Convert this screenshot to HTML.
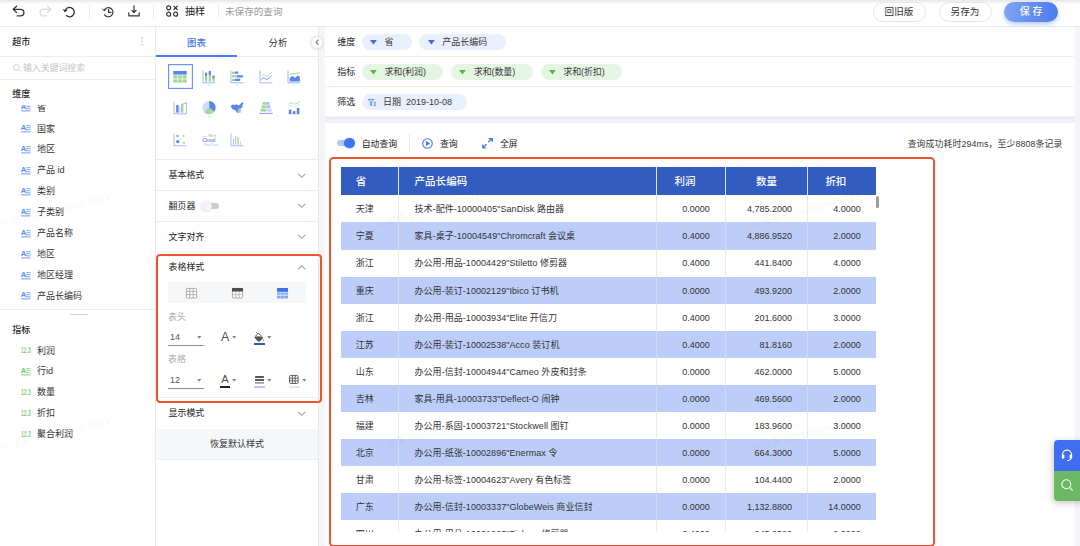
<!DOCTYPE html>
<html lang="zh-CN">
<head>
<meta charset="utf-8">
<title>查询</title>
<style>
*{box-sizing:border-box;margin:0;padding:0}
html,body{width:1080px;height:546px;overflow:hidden;background:#f4f5f9}
body{position:relative;font-family:"Liberation Sans","Noto Sans CJK SC",sans-serif;font-size:9px;color:#333;line-height:1}
.abs{position:absolute}
.t{position:absolute;white-space:nowrap;line-height:12px;height:12px}
svg{position:absolute;overflow:visible}
/* top bar */
#top{position:absolute;left:0;top:0;width:1080px;height:27px;background:#fff;border-bottom:1px solid #e4e8f4}
#topshadow{position:absolute;left:0;top:0;width:1080px;height:4px;background:linear-gradient(#e6e6e6,#fff)}
.vd{position:absolute;width:1px;background:#e8ecf5}
.btn{position:absolute;top:1.8px;height:20.3px;border:1px solid #e3e6ee;border-radius:10px;background:#fff;text-align:center;line-height:18.6px;font-size:9.6px;color:#333}
/* left */
#left{position:absolute;left:0;top:27px;width:156px;height:519px;background:#fff;border-right:1px solid #e6e9f3}
.hl{position:absolute;height:1px;background:#eceef6}
.li{position:absolute;left:37px;white-space:nowrap;line-height:12px;height:12px;font-size:9px;color:#333}
/* mid */
#mid{position:absolute;left:156px;top:27px;width:163px;height:519px;background:#fff;border-right:1px solid #e6e9f3}
.acc{position:absolute;left:12.5px;font-size:8.95px;color:#222;line-height:12px;height:12px;white-space:nowrap}
/* right */
#dims{position:absolute;left:325px;top:27px;width:749.8px;height:89.2px;background:#fff}
#gap{position:absolute;left:325px;top:116px;width:749.8px;height:7px;background:linear-gradient(to bottom,#fff 0%,#e4e6ee 21%,#eef0f5 43%,#eff1f6 78%,#e9ebf2 90%,#fff 100%)}
.pill{position:absolute;height:16.4px;border-radius:9px;font-size:9px;line-height:17.3px;white-space:nowrap;color:#3a3a3a}
.pb{background:#eaeffe}
.pg{background:#e4f5e3;letter-spacing:-0.12px}
#panel{position:absolute;left:325px;top:122.9px;width:749.8px;height:423px;background:#fff}
.redbox{position:absolute;border:2px solid #f0542c;border-radius:4px}
.wm{position:absolute;height:12px;line-height:12px;font-size:10.5px;color:rgba(0,0,0,.05);white-space:nowrap;transform-origin:0 100%;transform:rotate(-14.5deg);z-index:20;pointer-events:none}
/* table */
#tbl{position:absolute;left:340.6px;top:167.1px;width:535.5px;height:364.5px;overflow:hidden;background:#fff}
.row{position:absolute;left:0;width:535.5px;height:27.1px}
.row.s{background:#bccdf9}
.c{position:absolute;top:0;height:100%;line-height:28.9px;font-size:9px;color:#333;white-space:nowrap;border-right:0.8px solid rgba(222,225,233,.7)}
.c1{left:0;width:58.4px;padding-left:15.2px}
.c2{left:58.4px;width:258.1px;padding-left:15.5px;letter-spacing:0.05px}
.c3{left:316.5px;width:68.9px;text-align:right;padding-right:15.2px}
.c4{left:385.4px;width:82.2px;text-align:right;padding-right:15.2px}
.c5{left:467.6px;width:67.9px;text-align:right;padding-right:15.4px;border-right:none}
.hd{background:#335cc0;height:28.3px}
.hd .c{color:#fff;font-size:10.5px;line-height:28px;border-right:0.8px solid rgba(255,255,255,.85);text-align:left;font-weight:500}
.hd .c3{padding-left:17.4px}
.hd .c4{text-align:center;padding:0}
.hd .c5{padding-left:17.2px;border-right:none}
</style>
</head>
<body>
<div id="top"><div id="topshadow"></div>
<svg style="left:12px;top:5.3px" width="14" height="12" viewBox="0 0 14 12" fill="none" stroke="#333" stroke-width="1.3" stroke-linecap="round" stroke-linejoin="round"><path d="M4.6 1.2 L1.2 4.3 L4.6 7.4"/><path d="M1.6 4.3 H8.6 A3.3 3.3 0 0 1 8.6 10.9 H5.2"/></svg>
<svg style="left:37.5px;top:5.3px" width="14" height="12" viewBox="0 0 14 12" fill="none" stroke="#dcdcdc" stroke-width="1.3" stroke-linecap="round" stroke-linejoin="round"><path d="M9.4 1.2 L12.8 4.3 L9.4 7.4"/><path d="M12.4 4.3 H5.4 A3.3 3.3 0 0 0 5.4 10.9 H8.8"/></svg>
<svg style="left:63px;top:5.8px" width="13" height="12" viewBox="0 0 13 12" fill="none" stroke="#333" stroke-width="1.3" stroke-linecap="round" stroke-linejoin="round"><path d="M2.0 5.0 A4.7 4.7 0 1 1 3.4 9.6"/><path d="M0.7 3.6 L2.0 5.4 L3.8 4.2" stroke-width="1.1"/></svg>
<div class="vd" style="left:88.5px;top:5px;height:13px"></div>
<svg style="left:102px;top:5.8px" width="12" height="12" viewBox="0 0 12 12" fill="none" stroke="#333" stroke-width="1.2" stroke-linecap="round" stroke-linejoin="round"><path d="M2.2 4.2 A4.6 4.6 0 1 1 2.6 8.8"/><path d="M0.6 3.0 L2.2 4.8 L4.0 3.4" stroke-width="1.0"/><path d="M6.6 3.4 V6.3 H9.0"/></svg>
<svg style="left:127.5px;top:5.3px" width="12" height="12" viewBox="0 0 12 12" fill="none" stroke="#333" stroke-width="1.2" stroke-linecap="round" stroke-linejoin="round"><path d="M6 0.8 V7.2"/><path d="M3.9 5.4 L6 7.5 L8.1 5.4"/><path d="M0.8 7.8 V10.8 H11.2 V7.8"/></svg>
<div class="vd" style="left:152.5px;top:5px;height:13px"></div>
<svg style="left:165.5px;top:5.3px" width="13" height="12" viewBox="0 0 13 12" fill="none" stroke="#333" stroke-width="1.2" stroke-linecap="round"><circle cx="2.7" cy="2.8" r="2"/><circle cx="2.7" cy="9.2" r="2"/><circle cx="9.6" cy="9.2" r="2"/><path d="M7.9 1.1 L11.3 4.5 M11.3 1.1 L7.9 4.5"/></svg>
<div class="t" style="left:185px;top:5.9px;font-size:10px;color:#222">抽样</div>
<div class="vd" style="left:217.5px;top:5px;height:13px"></div>
<div class="t" style="left:225px;top:5.9px;font-size:9.6px;color:#9a9a9a">未保存的查询</div>
<div class="btn" style="left:872.5px;width:53px">回旧版</div>
<div class="btn" style="left:938.5px;width:53px">另存为</div>
<div class="btn" style="left:1004.5px;width:53.8px;left:1004.2px;border:none;top:1.7px;height:20.6px;line-height:20.4px;font-weight:500;color:#fff;font-size:10px;background:linear-gradient(90deg,#7ea4f4,#4a7cee);box-shadow:0 2px 4px rgba(80,130,240,.45)">保 存</div>
</div>
<div id="left"></div>
<div class="t" style="left:12.3px;top:36px;font-size:9px;color:#1f1f1f;font-weight:500">超市</div>
<svg style="left:140.7px;top:37px" width="2" height="9" viewBox="0 0 2 9" fill="#9a9a9a"><circle cx="1" cy="1" r="0.65"/><circle cx="1" cy="4.3" r="0.65"/><circle cx="1" cy="7.6" r="0.65"/></svg>
<div class="hl" style="left:0;top:56.3px;width:155px"></div>
<svg style="left:13px;top:64.2px" width="8" height="8" viewBox="0 0 8 8" fill="none" stroke="#cfcfcf" stroke-width="0.9"><circle cx="3.4" cy="3.4" r="2.9"/><path d="M5.6 5.6 L7.4 7.4" stroke-linecap="round"/></svg>
<div class="t" style="left:23px;top:62.2px;font-size:8.9px;color:#c6c6c6">输入关键词搜索</div>
<div class="hl" style="left:0;top:79.3px;width:155px"></div>
<div class="t" style="left:12.3px;top:88px;font-size:9px;color:#1f1f1f;font-weight:500">维度</div>
<div class="abs" style="left:0;top:104.6px;width:155px;height:204px;overflow:hidden"><div class="abs" style="left:0;top:-104.6px;width:155px;height:420px">
<svg style="left:20.9px;top:103.3px" width="10" height="9" viewBox="0 0 10 9"><text x="-0.2" y="6.4" font-size="7.6" font-weight="bold" fill="#5a88f4" font-family="Liberation Sans, sans-serif">A</text><path d="M0 7.9 H9.5" stroke="#5a88f4" stroke-width="0.85"/><path d="M5.2 1.7 H9.5 M5.2 3.7 H9.5 M4.9 5.8 H9.5" stroke="#5a88f4" stroke-width="0.85" opacity=".9"/></svg>
<div class="li" style="top:101.6px">省</div>
<svg style="left:20.9px;top:124.2px" width="10" height="9" viewBox="0 0 10 9"><text x="-0.2" y="6.4" font-size="7.6" font-weight="bold" fill="#5a88f4" font-family="Liberation Sans, sans-serif">A</text><path d="M0 7.9 H9.5" stroke="#5a88f4" stroke-width="0.85"/><path d="M5.2 1.7 H9.5 M5.2 3.7 H9.5 M4.9 5.8 H9.5" stroke="#5a88f4" stroke-width="0.85" opacity=".9"/></svg>
<div class="li" style="top:122.5px">国家</div>
<svg style="left:20.9px;top:145.1px" width="10" height="9" viewBox="0 0 10 9"><text x="-0.2" y="6.4" font-size="7.6" font-weight="bold" fill="#5a88f4" font-family="Liberation Sans, sans-serif">A</text><path d="M0 7.9 H9.5" stroke="#5a88f4" stroke-width="0.85"/><path d="M5.2 1.7 H9.5 M5.2 3.7 H9.5 M4.9 5.8 H9.5" stroke="#5a88f4" stroke-width="0.85" opacity=".9"/></svg>
<div class="li" style="top:143.4px">地区</div>
<svg style="left:20.9px;top:166.0px" width="10" height="9" viewBox="0 0 10 9"><text x="-0.2" y="6.4" font-size="7.6" font-weight="bold" fill="#5a88f4" font-family="Liberation Sans, sans-serif">A</text><path d="M0 7.9 H9.5" stroke="#5a88f4" stroke-width="0.85"/><path d="M5.2 1.7 H9.5 M5.2 3.7 H9.5 M4.9 5.8 H9.5" stroke="#5a88f4" stroke-width="0.85" opacity=".9"/></svg>
<div class="li" style="top:164.3px">产品 id</div>
<svg style="left:20.9px;top:186.9px" width="10" height="9" viewBox="0 0 10 9"><text x="-0.2" y="6.4" font-size="7.6" font-weight="bold" fill="#5a88f4" font-family="Liberation Sans, sans-serif">A</text><path d="M0 7.9 H9.5" stroke="#5a88f4" stroke-width="0.85"/><path d="M5.2 1.7 H9.5 M5.2 3.7 H9.5 M4.9 5.8 H9.5" stroke="#5a88f4" stroke-width="0.85" opacity=".9"/></svg>
<div class="li" style="top:185.2px">类别</div>
<svg style="left:20.9px;top:207.8px" width="10" height="9" viewBox="0 0 10 9"><text x="-0.2" y="6.4" font-size="7.6" font-weight="bold" fill="#5a88f4" font-family="Liberation Sans, sans-serif">A</text><path d="M0 7.9 H9.5" stroke="#5a88f4" stroke-width="0.85"/><path d="M5.2 1.7 H9.5 M5.2 3.7 H9.5 M4.9 5.8 H9.5" stroke="#5a88f4" stroke-width="0.85" opacity=".9"/></svg>
<div class="li" style="top:206.1px">子类别</div>
<svg style="left:20.9px;top:228.7px" width="10" height="9" viewBox="0 0 10 9"><text x="-0.2" y="6.4" font-size="7.6" font-weight="bold" fill="#5a88f4" font-family="Liberation Sans, sans-serif">A</text><path d="M0 7.9 H9.5" stroke="#5a88f4" stroke-width="0.85"/><path d="M5.2 1.7 H9.5 M5.2 3.7 H9.5 M4.9 5.8 H9.5" stroke="#5a88f4" stroke-width="0.85" opacity=".9"/></svg>
<div class="li" style="top:227.0px">产品名称</div>
<svg style="left:20.9px;top:249.6px" width="10" height="9" viewBox="0 0 10 9"><text x="-0.2" y="6.4" font-size="7.6" font-weight="bold" fill="#5a88f4" font-family="Liberation Sans, sans-serif">A</text><path d="M0 7.9 H9.5" stroke="#5a88f4" stroke-width="0.85"/><path d="M5.2 1.7 H9.5 M5.2 3.7 H9.5 M4.9 5.8 H9.5" stroke="#5a88f4" stroke-width="0.85" opacity=".9"/></svg>
<div class="li" style="top:247.9px">地区</div>
<svg style="left:20.9px;top:270.5px" width="10" height="9" viewBox="0 0 10 9"><text x="-0.2" y="6.4" font-size="7.6" font-weight="bold" fill="#5a88f4" font-family="Liberation Sans, sans-serif">A</text><path d="M0 7.9 H9.5" stroke="#5a88f4" stroke-width="0.85"/><path d="M5.2 1.7 H9.5 M5.2 3.7 H9.5 M4.9 5.8 H9.5" stroke="#5a88f4" stroke-width="0.85" opacity=".9"/></svg>
<div class="li" style="top:268.8px">地区经理</div>
<svg style="left:20.9px;top:291.4px" width="10" height="9" viewBox="0 0 10 9"><text x="-0.2" y="6.4" font-size="7.6" font-weight="bold" fill="#5a88f4" font-family="Liberation Sans, sans-serif">A</text><path d="M0 7.9 H9.5" stroke="#5a88f4" stroke-width="0.85"/><path d="M5.2 1.7 H9.5 M5.2 3.7 H9.5 M4.9 5.8 H9.5" stroke="#5a88f4" stroke-width="0.85" opacity=".9"/></svg>
<div class="li" style="top:289.7px">产品长编码</div>
</div></div>
<div class="hl" style="left:0;top:309px;width:155px"></div>
<div class="abs" style="left:69.5px;top:313.8px;width:18px;height:1px;background:#cfd3e0"></div>
<div class="t" style="left:12.3px;top:324px;font-size:9px;color:#1f1f1f;font-weight:500">指标</div>
<svg style="left:20.8px;top:346.1px" width="11" height="8" viewBox="0 0 11 8"><text x="0" y="7" font-size="9.2" font-weight="bold" fill="#8fd07e" font-family="Liberation Sans, sans-serif" transform="scale(0.6,1)" textLength="16.6" lengthAdjust="spacingAndGlyphs">12.3</text></svg>
<div class="li" style="top:344.5px">利润</div>
<svg style="left:20.9px;top:367.1px" width="10" height="9" viewBox="0 0 10 9"><text x="-0.2" y="6.4" font-size="7.6" font-weight="bold" fill="#7dc36c" font-family="Liberation Sans, sans-serif">A</text><path d="M0 7.9 H9.5" stroke="#7dc36c" stroke-width="0.85"/><path d="M5.2 1.7 H9.5 M5.2 3.7 H9.5 M4.9 5.8 H9.5" stroke="#7dc36c" stroke-width="0.85" opacity=".9"/></svg>
<div class="li" style="top:365.4px">行id</div>
<svg style="left:20.8px;top:387.9px" width="11" height="8" viewBox="0 0 11 8"><text x="0" y="7" font-size="9.2" font-weight="bold" fill="#8fd07e" font-family="Liberation Sans, sans-serif" transform="scale(0.6,1)" textLength="16.6" lengthAdjust="spacingAndGlyphs">12.3</text></svg>
<div class="li" style="top:386.3px">数量</div>
<svg style="left:20.8px;top:408.8px" width="11" height="8" viewBox="0 0 11 8"><text x="0" y="7" font-size="9.2" font-weight="bold" fill="#8fd07e" font-family="Liberation Sans, sans-serif" transform="scale(0.6,1)" textLength="16.6" lengthAdjust="spacingAndGlyphs">12.3</text></svg>
<div class="li" style="top:407.2px">折扣</div>
<svg style="left:20.8px;top:429.7px" width="11" height="8" viewBox="0 0 11 8"><text x="0" y="7" font-size="9.2" font-weight="bold" fill="#8fd07e" font-family="Liberation Sans, sans-serif" transform="scale(0.6,1)" textLength="16.6" lengthAdjust="spacingAndGlyphs">12.3</text></svg>
<div class="li" style="top:428.1px">聚合利润</div>
<div id="mid"></div>
<div class="t" style="left:187px;top:36.8px;font-size:9.4px;color:#4175ee;font-weight:500">图表</div>
<div class="t" style="left:268.5px;top:36.8px;font-size:9.4px;color:#333">分析</div>
<div class="hl" style="left:156px;top:56px;width:162px;background:#e9ecf4"></div>
<div class="abs" style="left:156px;top:55.2px;width:81px;height:1.6px;background:#4a7cf0"></div>
<div class="abs" style="left:311.1px;top:36.2px;width:12.4px;height:12.4px;border-radius:50%;background:#fff;border:0.6px solid #e6e8ef;box-shadow:0 0.5px 2.5px rgba(0,0,0,.16);z-index:5"></div>
<svg style="left:315px;top:39.3px;z-index:6" width="4.4" height="6.4" viewBox="0 0 4.4 6.4" fill="none" stroke="#777" stroke-width="1.05"><path d="M3.6 0.6 L1 3.2 L3.6 5.8"/></svg>
<div class="abs" style="left:167.6px;top:64.3px;width:25px;height:24.4px;border:1px solid #6b91f5;box-shadow:inset 0 0 0 0.5px #c9d7fb"></div>
<svg style="left:173.2px;top:69.9px" width="14" height="14" viewBox="0 0 14 14" fill="none"><rect x="0.3" y="1" width="13.4" height="3.6" fill="#5b84f0"/><rect x="0.3" y="5.3" width="13.4" height="3.3" fill="#a3d797"/><rect x="0.3" y="9.3" width="13.4" height="3.3" fill="#a3d797"/><path d="M4.7 5.3 V12.6 M9.3 5.3 V12.6" stroke="#fff" stroke-width="0.7"/></svg>
<svg style="left:201.6px;top:69.9px" width="14" height="14" viewBox="0 0 14 14" fill="none"><path d="M1 0.5 V12.8 H13.4" stroke="#8facf6" stroke-width="0.85"/><path d="M6 14.6 L7 15.6 L8 14.6" stroke="#a9c0f8" stroke-width="0.7"/><rect x="3" y="5.2" width="2.2" height="6.4" fill="#a3d797"/><rect x="3" y="2.6" width="2.2" height="3.4" rx="1" fill="#5b84f0"/><rect x="6.7" y="4.4" width="2.2" height="7.2" fill="#a3d797"/><rect x="6.7" y="0.8" width="2.2" height="4.6" rx="1" fill="#5b84f0"/><rect x="10.4" y="8" width="2.2" height="3.6" fill="#a3d797"/><rect x="10.4" y="5.4" width="2.2" height="3.2" rx="1" fill="#5b84f0"/></svg>
<svg style="left:230.1px;top:69.9px" width="14" height="14" viewBox="0 0 14 14" fill="none"><path d="M1 0.5 V12.8 H13.4" stroke="#8facf6" stroke-width="0.85"/><path d="M6 14.6 L7 15.6 L8 14.6" stroke="#a9c0f8" stroke-width="0.7"/><rect x="2" y="1.6" width="4" height="2.2" fill="#a3d797"/><rect x="5" y="1.6" width="3.4" height="2.2" rx="1" fill="#5b84f0"/><rect x="2" y="5.2" width="6" height="2.2" fill="#a3d797"/><rect x="7" y="5.2" width="6" height="2.2" rx="1" fill="#5b84f0"/><rect x="2" y="8.8" width="4" height="2.2" fill="#a3d797"/><rect x="5" y="8.8" width="5.4" height="2.2" rx="1" fill="#5b84f0"/></svg>
<svg style="left:258.5px;top:69.9px" width="14" height="14" viewBox="0 0 14 14" fill="none"><path d="M1 0.5 V12.8 H13.4" stroke="#8facf6" stroke-width="0.85"/><path d="M2.4 6.4 C4 4.2 5 4.2 6.4 5.6 S9.4 5.6 12.6 2.6" stroke="#a3d797" stroke-width="0.9"/><path d="M2.4 9.6 C4 7.4 5 7.4 6.4 8.8 S9.4 8.8 12.6 5.8" stroke="#5b84f0" stroke-width="0.9"/></svg>
<svg style="left:287.1px;top:69.9px" width="14" height="14" viewBox="0 0 14 14" fill="none"><path d="M1 0.5 V12.8 H13.4" stroke="#8facf6" stroke-width="0.85"/><path d="M6 14.6 L7 15.6 L8 14.6" stroke="#a9c0f8" stroke-width="0.7"/><path d="M2.6 4.6 C5 2.8 7 4.4 9 3.6 S11.6 2.8 12.8 3" stroke="#a3d797" stroke-width="1.1"/><path d="M2.6 11.4 V8.2 L5.4 5.8 L8 8 L10.8 5.4 L12.8 6.4 V11.4 Z" fill="#5b84f0"/></svg>
<svg style="left:173.2px;top:101.2px" width="14" height="14" viewBox="0 0 14 14" fill="none"><path d="M1 0.8 V12.8 H13.4 V1.6 L10 3" stroke="#8facf6" stroke-width="0.85"/><rect x="3.2" y="4" width="2.4" height="7.6" fill="#5b84f0"/><rect x="8" y="2.8" width="2.4" height="8.8" fill="#a3d797"/><rect x="5.8" y="5.6" width="1.6" height="6" fill="#cddafc"/></svg>
<svg style="left:201.6px;top:101.2px" width="14" height="14" viewBox="0 0 14 14" fill="none"><circle cx="7" cy="6.6" r="6.6" fill="#cddafc"/><path d="M7 6.6 V0 A6.6 6.6 0 0 1 12.2 10.6 Z" fill="#5b84f0"/><path d="M7 6.6 L12.2 10.6 A6.6 6.6 0 0 1 2.4 11.4 Z" fill="#a3d797"/><path d="M7 0 V6.6 L0.4 6.6" stroke="#e6ecfd" stroke-width="0.5"/><path d="M6 15.2 L7 16.2 L8 15.2" stroke="#a9c0f8" stroke-width="0.7"/></svg>
<svg style="left:230.1px;top:101.2px" width="14" height="14" viewBox="0 0 14 14" fill="none"><path d="M0.6 5.2 L2.6 3.4 L5 4 L6.4 3.2 L8.4 4.6 L10.4 3.2 L11.6 1.2 L13.6 2.2 L12.2 4.6 L12.8 6 L10.6 7.4 L11 9.6 L9.2 11.8 L6.8 11.4 L5.6 9.2 L3 8.6 L1.6 7 Z" fill="#5b84f0"/><path d="M8 8 L10.8 6.6 L11.4 9.4 L9.2 11.6 L7.4 10.4 Z" fill="#a3d797" opacity=".85"/><circle cx="10.8" cy="10.6" r="1.2" fill="#cddafc"/></svg>
<svg style="left:258.5px;top:101.2px" width="14" height="14" viewBox="0 0 14 14" fill="none"><rect x="3.6" y="1" width="3.2" height="2.8" fill="#a3d797"/><rect x="7.2" y="1" width="3.2" height="2.8" fill="#a9c0f8"/><rect x="2.6" y="4.4" width="4.2" height="2.8" fill="#a3d797"/><rect x="7.2" y="4.4" width="4.2" height="2.8" fill="#a9c0f8"/><rect x="1.4" y="7.8" width="5.4" height="2.8" fill="#a3d797"/><rect x="7.2" y="7.8" width="5.4" height="2.8" fill="#cddafc"/><path d="M0.2 12.4 H13.8" stroke="#5b84f0" stroke-width="0.8"/></svg>
<svg style="left:287.1px;top:101.2px" width="14" height="14" viewBox="0 0 14 14" fill="none"><path d="M1.8 3.4 C3.6 1.2 5 1.4 6.6 2.6 S10 2.6 12.6 0.6" stroke="#a3d797" stroke-width="0.9"/><path d="M1.8 6.2 C3.6 4 5 4.2 6.6 5.4 S10 5.4 12.6 3.4" stroke="#cddafc" stroke-width="0.9"/><rect x="1.8" y="8.6" width="2.6" height="4.6" fill="#5b84f0"/><rect x="5.8" y="10.2" width="2.6" height="3" fill="#5b84f0"/><rect x="9.8" y="7" width="2.6" height="6.2" fill="#5b84f0"/></svg>
<svg style="left:173.2px;top:133.1px" width="14" height="14" viewBox="0 0 14 14" fill="none"><path d="M1 0.5 V12.8 H13.4" stroke="#8facf6" stroke-width="0.85"/><circle cx="4.4" cy="3" r="1" fill="#5b84f0"/><circle cx="10.6" cy="3" r="1.1" fill="#a3d797"/><circle cx="4.8" cy="8.6" r="1.7" fill="#5b84f0"/><circle cx="7.8" cy="6" r="0.8" fill="#cddafc"/><circle cx="11" cy="9.8" r="1.1" fill="#a3d797"/></svg>
<svg style="left:201.6px;top:133.1px" width="14" height="14" viewBox="0 0 14 14" fill="none"><text x="0.2" y="9.4" font-size="5.2" font-weight="bold" letter-spacing="-0.35" fill="#5b84f0" font-family="Liberation Sans, sans-serif" opacity=".8">Cloud</text><text x="6.6" y="4" font-size="3" font-weight="bold" fill="#a3d797" font-family="Liberation Sans, sans-serif">Word</text><text x="2" y="12.6" font-size="2.8" fill="#a9c0f8" font-family="Liberation Sans, sans-serif">WordCloud</text><path d="M0.6 3.4 H5" stroke="#a9c0f8" stroke-width="0.6"/></svg>
<svg style="left:230.1px;top:133.1px" width="14" height="14" viewBox="0 0 14 14" fill="none"><path d="M1 0.5 V12.8 H13.4" stroke="#8facf6" stroke-width="0.85"/><rect x="3" y="6" width="1" height="5.8" fill="#a3d797"/><rect x="5.2" y="2.6" width="1" height="9.2" fill="#a9c0f8"/><rect x="7.4" y="4.4" width="1.4" height="7.4" fill="#a3d797"/><rect x="10" y="8" width="1" height="3.8" fill="#cddafc"/></svg>
<div class="acc" style="top:169.2px;left:168.5px">基本格式</div>
<svg style="left:297.2px;top:172.8px" width="9.4" height="5.2" viewBox="0 0 8.2 5" fill="none" stroke="#a2a2a2" stroke-width="1"><path d="M0.6 0.8 L4.1 4.1 L7.6 0.8"/></svg>
<div class="acc" style="top:199.8px;left:168.5px">翻页器</div>
<svg style="left:297.2px;top:203.4px" width="9.4" height="5.2" viewBox="0 0 8.2 5" fill="none" stroke="#a2a2a2" stroke-width="1"><path d="M0.6 0.8 L4.1 4.1 L7.6 0.8"/></svg>
<div class="acc" style="top:230.6px;left:168.5px">文字对齐</div>
<svg style="left:297.2px;top:234.2px" width="9.4" height="5.2" viewBox="0 0 8.2 5" fill="none" stroke="#a2a2a2" stroke-width="1"><path d="M0.6 0.8 L4.1 4.1 L7.6 0.8"/></svg>
<div class="acc" style="top:261.4px;left:168.5px">表格样式</div>
<svg style="left:297.2px;top:265.0px" width="9.4" height="5.2" viewBox="0 0 8.2 5" fill="none" stroke="#a2a2a2" stroke-width="1"><path d="M0.6 4.1 L4.1 0.8 L7.6 4.1"/></svg>
<div class="acc" style="top:407.4px;left:168.5px">显示模式</div>
<svg style="left:297.2px;top:411.0px" width="9.4" height="5.2" viewBox="0 0 8.2 5" fill="none" stroke="#a2a2a2" stroke-width="1"><path d="M0.6 0.8 L4.1 4.1 L7.6 0.8"/></svg>
<div class="hl" style="left:156px;top:159.3px;width:162px"></div>
<div class="hl" style="left:156px;top:190.2px;width:162px"></div>
<div class="hl" style="left:156px;top:220.6px;width:162px"></div>
<div class="hl" style="left:156px;top:251.7px;width:162px"></div>
<div class="hl" style="left:156px;top:397.4px;width:162px"></div>
<div class="hl" style="left:156px;top:428.6px;width:162px"></div>
<div class="abs" style="left:202px;top:202.6px;width:17px;height:6.6px;border-radius:4px;background:#c8ccd2"></div>
<div class="abs" style="left:201px;top:200.6px;width:10.6px;height:10.6px;border-radius:50%;background:#f3f4f7;box-shadow:0 0.5px 1.8px rgba(0,0,0,.2)"></div>
<div class="abs" style="left:168.1px;top:282.4px;width:138.1px;height:20.9px;background:#f6f7f9"></div>
<svg style="left:185.9px;top:288px" width="11" height="10.4" viewBox="0 0 11 10.4" fill="none"><rect x="0.4" y="0.4" width="10.2" height="9.6" rx="0.8" fill="#fff" stroke="#9a9a9a" stroke-width="0.8"/><path d="M0.4 3.4 H10.6 M0.4 6.6 H10.6 M3.8 0.4 V10 M7.2 0.4 V10" stroke="#9a9a9a" stroke-width="0.7"/></svg>
<svg style="left:231.9px;top:288px" width="11" height="10.4" viewBox="0 0 11 10.4" fill="none"><rect x="0.4" y="0.4" width="10.2" height="9.6" rx="0.8" fill="#fff" stroke="#9a9a9a" stroke-width="0.8"/><path d="M0.4 6.6 H10.6 M3.8 3 V10 M7.2 3 V10" stroke="#aaa" stroke-width="0.7"/><path d="M0 0.8 Q0 0 0.8 0 H10.2 Q11 0 11 0.8 V3.4 H0 Z" fill="#4d4d4d"/></svg>
<svg style="left:277.3px;top:288px" width="11" height="10.4" viewBox="0 0 11 10.4" fill="none"><rect x="0" y="0" width="11" height="10.4" rx="1" fill="#86a4f6"/><path d="M0 4.2 H11 M0 7.2 H11" stroke="#fff" stroke-width="0.8"/><path d="M3.8 4 V10.4 M7.2 4 V10.4" stroke="#dbe4fd" stroke-width="0.6"/><path d="M0 1 Q0 0 1 0 H10 Q11 0 11 1 V3.7 H0 Z" fill="#3f70ee"/></svg>
<div class="t" style="left:168.1px;top:311.1px;font-size:9px;color:#a8a8a8">表头</div>
<div class="t" style="left:168.1px;top:353.3px;font-size:9px;color:#a8a8a8">表格</div>
<div class="t" style="left:169.9px;top:330.9px;font-size:9px;color:#555">14</div>
<div class="abs" style="left:168.1px;top:345.2px;width:36px;height:0.8px;background:#8c8c8c"></div>
<svg style="left:197.3px;top:335.6px" width="4.6" height="2.8" viewBox="0 0 4.6 2.8"><path d="M0.2 0 H4.4 L2.3 2.8 Z" fill="#858585"/></svg>
<div class="t" style="left:169.9px;top:373.8px;font-size:9px;color:#555">12</div>
<div class="abs" style="left:168.1px;top:387.6px;width:36px;height:0.8px;background:#8c8c8c"></div>
<svg style="left:197.3px;top:378.5px" width="4.6" height="2.8" viewBox="0 0 4.6 2.8"><path d="M0.2 0 H4.4 L2.3 2.8 Z" fill="#858585"/></svg>
<div class="t" style="left:220.9px;top:329.3px;font-size:12.4px;line-height:16px;height:16px;color:#4d4d4d">A</div>
<svg style="left:232.4px;top:335.6px" width="4.6" height="2.8" viewBox="0 0 4.6 2.8"><path d="M0.2 0 H4.4 L2.3 2.8 Z" fill="#858585"/></svg>
<svg style="left:254.4px;top:332.2px" width="10.6" height="10" viewBox="0 0 10.6 10" fill="none"><path d="M2.4 0.4 L4.2 2.2" stroke="#555" stroke-width="0.8" stroke-linecap="round"/><path d="M4.4 1.2 L8.6 5.2 Q9 5.8 8.4 6.4 L6 8.8 Q5 9.5 4 8.8 L1.2 6 Q0.5 5.2 1.2 4.4 Z" fill="#fff" stroke="#555" stroke-width="0.9" stroke-linejoin="round"/><path d="M0.9 5 Q4.6 3.4 8.6 5.4 Q9 5.9 8.4 6.5 L6 8.9 Q5 9.6 4 8.9 L1.2 6.1 Q0.6 5.5 0.9 5 Z" fill="#555"/><path d="M9.6 7 Q10.5 8.5 9.6 9.1 Q8.7 8.5 9.6 7 Z" fill="#555"/></svg>
<div class="abs" style="left:254.4px;top:343.1px;width:10.6px;height:2.1px;background:#3058c6"></div>
<svg style="left:267.0px;top:335.6px" width="4.6" height="2.8" viewBox="0 0 4.6 2.8"><path d="M0.2 0 H4.4 L2.3 2.8 Z" fill="#858585"/></svg>
<div class="t" style="left:221.3px;top:372.4px;font-size:11.2px;line-height:15px;height:15px;color:#4d4d4d">A</div>
<div class="abs" style="left:219.8px;top:385.9px;width:10.6px;height:2.1px;background:#222"></div>
<svg style="left:232.4px;top:378.5px" width="4.6" height="2.8" viewBox="0 0 4.6 2.8"><path d="M0.2 0 H4.4 L2.3 2.8 Z" fill="#858585"/></svg>
<div class="abs" style="left:254.8px;top:375.6px;width:9.6px;height:2.5px;background:#555;border-radius:0.4px"></div><div class="abs" style="left:254.8px;top:378.8px;width:9.6px;height:2.7px;background:#5a5a5a"></div><div class="abs" style="left:254.8px;top:382.2px;width:9.6px;height:1.8px;background:linear-gradient(#8a8a8a,#c8c8c8)"></div>
<div class="abs" style="left:254.4px;top:385.9px;width:10.6px;height:2.1px;background:#b8cafa"></div>
<svg style="left:267.0px;top:378.5px" width="4.6" height="2.8" viewBox="0 0 4.6 2.8"><path d="M0.2 0 H4.4 L2.3 2.8 Z" fill="#858585"/></svg>
<svg style="left:289.4px;top:374.7px" width="9.6" height="9" viewBox="0 0 9.6 9" fill="none" stroke="#5e5e5e" stroke-width="0.95"><rect x="0.5" y="0.5" width="8.6" height="8" rx="1.2"/><path d="M0.5 3.2 H9.1 M0.5 5.8 H9.1 M3.4 0.5 V8.5 M6.2 0.5 V8.5"/></svg>
<div class="abs" style="left:289.2px;top:385.9px;width:10.4px;height:2.1px;background:#e3e5ef"></div>
<svg style="left:301.7px;top:378.5px" width="4.6" height="2.8" viewBox="0 0 4.6 2.8"><path d="M0.2 0 H4.4 L2.3 2.8 Z" fill="#858585"/></svg>
<div class="abs" style="left:156px;top:429.4px;width:162px;height:30.2px;background:#f6f7f9;border-bottom:1px solid #eceef4"></div>
<div class="t" style="left:156px;width:162px;text-align:center;top:438.3px;font-size:9px;color:#333">恢复默认样式</div>
<div class="redbox" style="left:156.4px;top:253.6px;width:165.6px;height:149.4px;border-width:2.3px;z-index:8"></div>
<div id="dims"></div>
<div class="hl" style="left:325px;top:56.4px;width:749px;background:#eceef5"></div>
<div class="hl" style="left:325px;top:86.3px;width:749px;background:#eceef5"></div>
<div class="t" style="left:337.2px;top:36.2px;font-size:9px;color:#222">维度</div>
<div class="t" style="left:337.2px;top:66.2px;font-size:9px;color:#222">指标</div>
<div class="t" style="left:337.2px;top:96.2px;font-size:9px;color:#222">筛选</div>
<div class="pill pb" style="left:361.7px;top:33.8px;width:50.5px;padding-left:22.8px">省</div>
<svg style="left:370.1px;top:40.3px" width="6.8" height="4.3" viewBox="0 0 6.8 4.3"><path d="M0.5 0 H6.3 Q6.9 0.1 6.5 0.6 L3.8 4 Q3.4 4.4 3 4 L0.3 0.6 Q-0.1 0.1 0.5 0 Z" fill="#3a6cf0"/></svg>
<div class="pill pb" style="left:419.4px;top:33.8px;width:86.8px;padding-left:22.8px">产品长编码</div>
<svg style="left:427.8px;top:40.3px" width="6.8" height="4.3" viewBox="0 0 6.8 4.3"><path d="M0.5 0 H6.3 Q6.9 0.1 6.5 0.6 L3.8 4 Q3.4 4.4 3 4 L0.3 0.6 Q-0.1 0.1 0.5 0 Z" fill="#3a6cf0"/></svg>
<div class="pill pg" style="left:361.7px;top:63.8px;width:81.7px;padding-left:22.8px">求和(利润)</div>
<svg style="left:370.1px;top:70.3px" width="6.8" height="4.3" viewBox="0 0 6.8 4.3"><path d="M0.5 0 H6.3 Q6.9 0.1 6.5 0.6 L3.8 4 Q3.4 4.4 3 4 L0.3 0.6 Q-0.1 0.1 0.5 0 Z" fill="#5cb544"/></svg>
<div class="pill pg" style="left:451px;top:63.8px;width:81.8px;padding-left:22.8px">求和(数量)</div>
<svg style="left:459.4px;top:70.3px" width="6.8" height="4.3" viewBox="0 0 6.8 4.3"><path d="M0.5 0 H6.3 Q6.9 0.1 6.5 0.6 L3.8 4 Q3.4 4.4 3 4 L0.3 0.6 Q-0.1 0.1 0.5 0 Z" fill="#5cb544"/></svg>
<div class="pill pg" style="left:540.5px;top:63.8px;width:81.7px;padding-left:22.8px">求和(折扣)</div>
<svg style="left:548.9px;top:70.3px" width="6.8" height="4.3" viewBox="0 0 6.8 4.3"><path d="M0.5 0 H6.3 Q6.9 0.1 6.5 0.6 L3.8 4 Q3.4 4.4 3 4 L0.3 0.6 Q-0.1 0.1 0.5 0 Z" fill="#5cb544"/></svg>
<div class="pill pb" style="left:361.7px;top:93.8px;width:105.6px;padding-left:21.4px">日期&nbsp; 2019-10-08</div>
<svg style="left:367.6px;top:98.6px" width="8" height="7.4" viewBox="0 0 8 7.4" fill="none" stroke="#4a7cf0" stroke-width="0.8" stroke-linejoin="round"><path d="M0.4 0.4 H5.8 L3.7 3 V6.8 L2.5 6 V3 Z"/><path d="M6.2 3.4 H7.6 M6.2 5 H7.6 M6.2 6.6 H7.6" stroke-linecap="round"/></svg>
<div id="gap"></div>
<div id="panel"></div>
<div class="abs" style="left:336.6px;top:139.9px;width:17.4px;height:6.6px;border-radius:4px;background:#b4c8fb"></div>
<div class="abs" style="left:344px;top:137.9px;width:10.6px;height:10.6px;border-radius:50%;background:#3f73f0;box-shadow:0 0.5px 1.5px rgba(40,80,200,.45)"></div>
<div class="t" style="left:361.7px;top:137.6px;font-size:8.9px;color:#222">自动查询</div>
<div class="vd" style="left:409px;top:134.3px;height:16.3px;background:#e6e8ee"></div>
<svg style="left:422.2px;top:137.7px" width="11" height="11" viewBox="0 0 11 11"><circle cx="5.5" cy="5.5" r="4.8" fill="#fff" stroke="#4a7cf0" stroke-width="1.1"/><path d="M4 2.9 L8.1 5.5 L4 8.1 Z" fill="#3f73f0"/></svg>
<div class="t" style="left:439.9px;top:137.6px;font-size:8.9px;color:#222">查询</div>
<svg style="left:482.3px;top:138.2px" width="11" height="10.4" viewBox="0 0 11 10.4" fill="none" stroke="#3f73f0" stroke-width="1.25" stroke-linecap="round" stroke-linejoin="round"><path d="M6.6 3.8 L10.2 0.6 M7.2 0.6 H10.2 V3.4"/><path d="M4.2 6.4 L0.8 9.8 M0.8 7 V9.8 H3.6"/></svg>
<div class="t" style="left:499.9px;top:137.6px;font-size:8.9px;color:#222">全屏</div>
<div class="t" style="right:17.6px;top:137.6px;font-size:8.9px;color:#3c3c3c;letter-spacing:0.09px">查询成功耗时294ms，至少8808条记录</div>
<div class="redbox" style="left:329.1px;top:156.5px;width:605.8px;height:390px;border-width:2.4px;border-radius:4.5px"></div>
<div id="tbl">
<div class="row hd" style="top:0"><div class="c c1">省</div><div class="c c2">产品长编码</div><div class="c c3">利润</div><div class="c c4">数量</div><div class="c c5">折扣</div></div>
<div class="row" style="top:28.30px"><div class="c c1">天津</div><div class="c c2">技术-配件-10000405&quot;SanDisk 路由器</div><div class="c c3">0.0000</div><div class="c c4">4,785.2000</div><div class="c c5">4.0000</div></div>
<div class="row s" style="top:55.35px"><div class="c c1">宁夏</div><div class="c c2">家具-桌子-10004549&quot;Chromcraft 会议桌</div><div class="c c3">0.4000</div><div class="c c4">4,886.9520</div><div class="c c5">2.0000</div></div>
<div class="row" style="top:82.40px"><div class="c c1">浙江</div><div class="c c2">办公用-用品-10004429&quot;Stiletto 修剪器</div><div class="c c3">0.4000</div><div class="c c4">441.8400</div><div class="c c5">4.0000</div></div>
<div class="row s" style="top:109.45px"><div class="c c1">重庆</div><div class="c c2">办公用-装订-10002129&quot;Ibico 订书机</div><div class="c c3">0.0000</div><div class="c c4">493.9200</div><div class="c c5">2.0000</div></div>
<div class="row" style="top:136.50px"><div class="c c1">浙江</div><div class="c c2">办公用-用品-10003934&quot;Elite 开信刀</div><div class="c c3">0.4000</div><div class="c c4">201.6000</div><div class="c c5">3.0000</div></div>
<div class="row s" style="top:163.55px"><div class="c c1">江苏</div><div class="c c2">办公用-装订-10002538&quot;Acco 装订机</div><div class="c c3">0.4000</div><div class="c c4">81.8160</div><div class="c c5">2.0000</div></div>
<div class="row" style="top:190.60px"><div class="c c1">山东</div><div class="c c2">办公用-信封-10004944&quot;Cameo 外皮和封条</div><div class="c c3">0.0000</div><div class="c c4">462.0000</div><div class="c c5">5.0000</div></div>
<div class="row s" style="top:217.65px"><div class="c c1">吉林</div><div class="c c2">家具-用具-10003733&quot;Deflect-O 闹钟</div><div class="c c3">0.0000</div><div class="c c4">469.5600</div><div class="c c5">2.0000</div></div>
<div class="row" style="top:244.70px"><div class="c c1">福建</div><div class="c c2">办公用-系固-10003721&quot;Stockwell 图钉</div><div class="c c3">0.0000</div><div class="c c4">183.9600</div><div class="c c5">3.0000</div></div>
<div class="row s" style="top:271.75px"><div class="c c1">北京</div><div class="c c2">办公用-纸张-10002896&quot;Enermax 令</div><div class="c c3">0.0000</div><div class="c c4">664.3000</div><div class="c c5">5.0000</div></div>
<div class="row" style="top:298.80px"><div class="c c1">甘肃</div><div class="c c2">办公用-标签-10004623&quot;Avery 有色标签</div><div class="c c3">0.0000</div><div class="c c4">104.4400</div><div class="c c5">2.0000</div></div>
<div class="row s" style="top:325.85px"><div class="c c1">广东</div><div class="c c2">办公用-信封-10003337&quot;GlobeWeis 商业信封</div><div class="c c3">0.0000</div><div class="c c4">1,132.8800</div><div class="c c5">14.0000</div></div>
<div class="row" style="top:352.90px"><div class="c c1">四川</div><div class="c c2">办公用-用品-10001225&quot;Fiskars 修剪器</div><div class="c c3">0.4000</div><div class="c c4">245.2520</div><div class="c c5">2.0000</div></div>
</div>
<div class="abs" style="left:876.3px;top:196px;width:3px;height:11.6px;border-radius:1.5px;background:#9c9c9c"></div>
<div class="abs" style="left:1053.6px;top:440.4px;width:30px;height:60.4px;border-radius:4px;overflow:hidden;box-shadow:-1px 2px 7px rgba(0,0,0,.22)"><div style="height:30.2px;background:#3f6ff0"></div><div style="height:30.2px;background:#6db865"></div></div>
<svg style="left:1061.2px;top:448.8px" width="12" height="12.4" viewBox="0 0 12 12.4" fill="none" stroke="#fff" stroke-width="1.15" stroke-linecap="round"><path d="M1.5 7.4 V5.6 A4.5 4.5 0 0 1 10.5 5.6 V7.4"/><rect x="0.8" y="5.4" width="2.6" height="4.4" rx="1.2" fill="#fff" stroke="none"/><rect x="8.6" y="5.4" width="2.6" height="4.4" rx="1.2" fill="#fff" stroke="none"/><path d="M10.3 9.4 Q10.1 11.6 6.6 11.6" stroke-width="1"/></svg>
<svg style="left:1061.3px;top:479.4px" width="12" height="12" viewBox="0 0 12 12" fill="none" stroke="#fff" stroke-width="1.1" stroke-linecap="round"><circle cx="5.3" cy="5.3" r="4.5"/><path d="M8.7 8.7 L11.4 11.3"/></svg>
<div class="wm" style="left:2px;top:218px">孙晓美 sunxiaomei.0311</div>
<div class="wm" style="left:2px;top:441px">孙晓美 sunxiaomei.0311</div>
<div class="wm" style="left:377px;top:218px">孙晓美 sunxiaomei.0311</div>
<div class="wm" style="left:377px;top:441px">孙晓美 sunxiaomei.0311</div>
<div class="wm" style="left:752px;top:218px">孙晓美 sunxiaomei.0311</div>
<div class="wm" style="left:752px;top:441px">孙晓美 sunxiaomei.0311</div>
</body>
</html>
